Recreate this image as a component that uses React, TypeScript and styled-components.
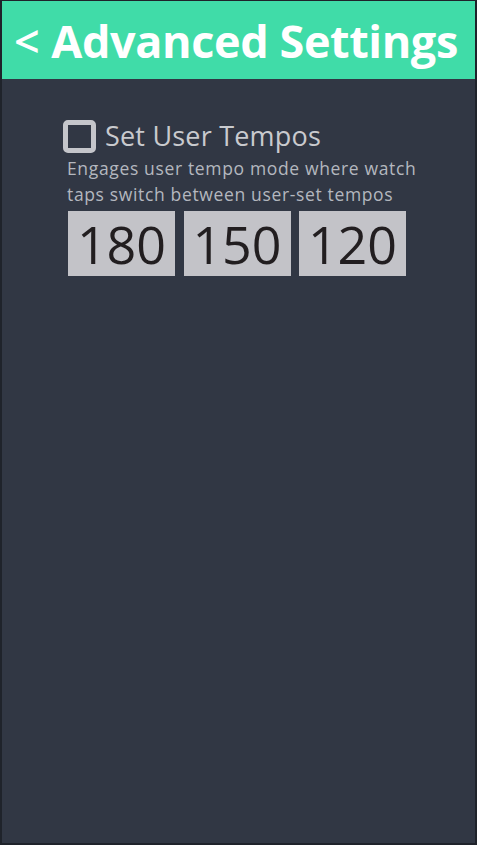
import React, { FC, useState } from 'react';
import styled, { createGlobalStyle } from 'styled-components';

const GlobalStyle = createGlobalStyle`
  html, body {
    margin: 0;
    padding: 0;
    background: #1e222a;
  }
  body {
    font-family: 'Open Sans', 'Noto Sans', sans-serif;
  }
`;

const Frame = styled.div`
  box-sizing: border-box;
  width: 477px;
  height: 845px;
  padding: 1px 2px 2px 2px;
  background: #1f232b;
`;

const Screen = styled.div`
  display: flex;
  flex-direction: column;
  height: 100%;
  background: #313744;
`;

const Header = styled.header`
  display: flex;
  align-items: center;
  height: 78px;
  padding-left: 12px;
  background: #40dca8;
  color: #ffffff;
  font-family: 'Open Sans', sans-serif;
  font-weight: 700;
  font-size: 45px;
  letter-spacing: -0.4px;
  white-space: nowrap;
`;

const Back = styled.span`
  margin-right: 12px;
  font-weight: 600;
`;

const Content = styled.div`
  display: flex;
  flex-direction: column;
  padding: 39px 0 0 61px;
`;

const OptionRow = styled.label`
  display: flex;
  align-items: center;
  gap: 9px;
  cursor: pointer;
`;

const Box = styled.span<{ $checked: boolean }>`
  box-sizing: border-box;
  width: 33px;
  height: 33px;
  border: 5px solid #c4c5ca;
  border-radius: 5px;
  background: ${(p) => (p.$checked ? '#c4c5ca' : 'transparent')};
`;

const OptionTitle = styled.span`
  color: #c9cace;
  font-size: 27px;
  line-height: 36px;
  letter-spacing: 0.2px;
`;

const Description = styled.p`
  margin: 1px 0 0 4px;
  width: 362px;
  color: #b4b7bf;
  font-size: 17.5px;
  line-height: 26px;
  letter-spacing: 0.65px;
`;

const Tempos = styled.div`
  display: flex;
  gap: 8.5px;
  margin: 4px 0 0 5px;
`;

const Tempo = styled.div`
  display: flex;
  align-items: center;
  justify-content: center;
  width: 107px;
  height: 65px;
  background: #c3c3c8;
  color: #221e20;
  font-size: 52px;
`;

const tempos = [180, 150, 120];

const App: FC = () => {
  const [checked, setChecked] = useState<boolean>(false);

  return (
    <>
      <GlobalStyle />
      <Frame>
        <Screen>
          <Header>
            <Back>&lt;</Back>
            Advanced Settings
          </Header>
          <Content>
            <OptionRow onClick={() => setChecked(!checked)}>
              <Box $checked={checked} />
              <OptionTitle>Set User Tempos</OptionTitle>
            </OptionRow>
            <Description>
              Engages user tempo mode where watch taps switch between user-set tempos
            </Description>
            <Tempos>
              {tempos.map((t) => (
                <Tempo key={t}>{t}</Tempo>
              ))}
            </Tempos>
          </Content>
        </Screen>
      </Frame>
    </>
  );
};

export default App;
